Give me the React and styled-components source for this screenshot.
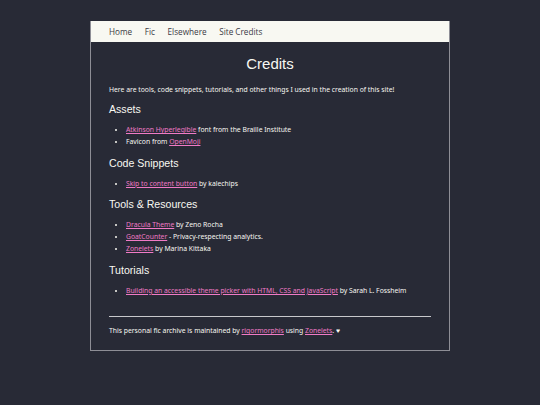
import * as React from "react"
import styled, { createGlobalStyle } from "styled-components"

const Global = createGlobalStyle`
  html, body {
    margin: 0;
    padding: 0;
    background: #282a36;
  }
  body {
    font-family: "Noto Sans", "Open Sans", sans-serif;
    color: #f8f8f2;
  }
`

const Page = styled.div`
  padding: 21px 0 40px 90px;
`

const Container = styled.div`
  width: 358px;
  border: 1px solid #8e8e96;
  border-top: none;
  background: #282a36;
`

const Nav = styled.nav`
  display: flex;
  gap: 12.6px;
  height: 21px;
  align-items: center;
  padding: 0 18px;
  background: #f8f8f2;
  font-family: "Open Sans", sans-serif;
  font-size: 8.2px;
  color: #3a3a44;
`

const NavLink = styled.a`
  color: inherit;
  text-decoration: none;
`

const Main = styled.main`
  padding: 12px 18px 0;
`

const Title = styled.h1`
  margin: 0 0 12px;
  text-align: center;
  font-family: "Liberation Sans", sans-serif;
  font-weight: normal;
  font-size: 15px;
  line-height: 19px;
`

const Para = styled.p`
  margin: 0;
  font-size: 6.8px;
  line-height: 10px;
`

const Heading = styled.h2`
  margin: 7.3px 0 8px;
  font-family: "Liberation Sans", sans-serif;
  font-weight: normal;
  font-size: 10.6px;
  line-height: 14px;
`

const List = styled.ul`
  margin: 0;
  padding-left: 17px;
  font-size: 6.8px;
  line-height: 12.1px;
  li::marker {
    font-size: 6px;
  }
`

const Link = styled.a`
  color: #f07ac6;
  text-decoration: underline;
`

const Rule = styled.hr`
  margin: 19.5px 0 9px;
  border: none;
  border-top: 1px solid #c8c8cc;
`

const Footer = styled.footer`
  font-size: 6.8px;
  line-height: 10px;
  padding-bottom: 13.5px;
`

export default function App() {
  return (
    <>
      <Global />
      <Page>
        <Container>
          <Nav>
            <NavLink href="#">Home</NavLink>
            <NavLink href="#">Fic</NavLink>
            <NavLink href="#">Elsewhere</NavLink>
            <NavLink href="#">Site Credits</NavLink>
          </Nav>
          <Main>
            <Title>Credits</Title>
            <Para>
              Here are tools, code snippets, tutorials, and other things I used in the creation of this site!
            </Para>
            <Heading>Assets</Heading>
            <List>
              <li><Link href="#">Atkinson Hyperlegible</Link> font from the Braille Institute</li>
              <li>Favicon from <Link href="#">OpenMoji</Link></li>
            </List>
            <Heading>Code Snippets</Heading>
            <List>
              <li><Link href="#">Skip to content button</Link> by kalechips</li>
            </List>
            <Heading>Tools &amp; Resources</Heading>
            <List>
              <li><Link href="#">Dracula Theme</Link> by Zeno Rocha</li>
              <li><Link href="#">GoatCounter</Link> - Privacy-respecting analytics.</li>
              <li><Link href="#">Zonelets</Link> by Marina Kittaka</li>
            </List>
            <Heading>Tutorials</Heading>
            <List>
              <li><Link href="#">Building an accessible theme picker with HTML, CSS and JavaScript</Link> by Sarah L. Fossheim</li>
            </List>
            <Rule />
            <Footer>
              This personal fic archive is maintained by <Link href="#">rigormorphis</Link> using <Link href="#">Zonelets</Link>. ♥
            </Footer>
          </Main>
        </Container>
      </Page>
    </>
  )
}
